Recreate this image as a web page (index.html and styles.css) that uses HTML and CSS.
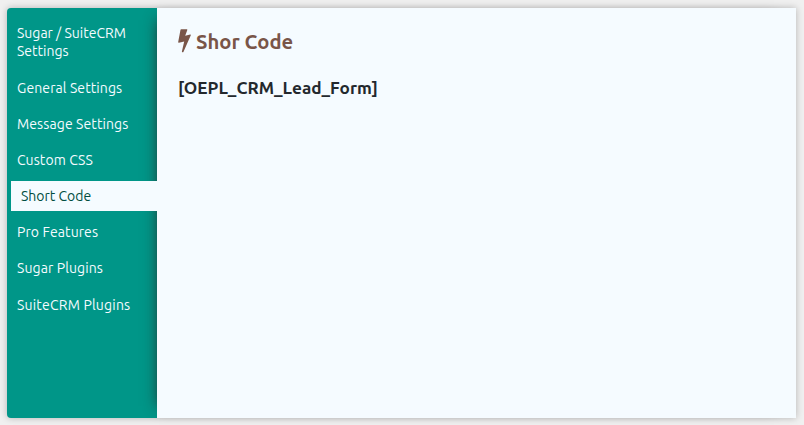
FILE: index.html
```html
<!DOCTYPE html>
<html lang="en">
<head>
<meta charset="utf-8">
<title>Short Code</title>
<link rel="stylesheet" href="styles.css">
</head>
<body>
<div class="panel">
  <nav class="tabs">
    <a class="tab tall">Sugar / SuiteCRM Settings</a>
    <a class="tab">General Settings</a>
    <a class="tab">Message Settings</a>
    <a class="tab">Custom CSS</a>
    <a class="tab active">Short Code</a>
    <a class="tab">Pro Features</a>
    <a class="tab">Sugar Plugins</a>
    <a class="tab wide">SuiteCRM Plugins</a>
  </nav>
  <main class="content">
    <h1 class="title"><svg class="bolt" viewBox="0 0 13 24" aria-hidden="true"><path d="M3.2 0.2H8.9Q9.5 0.3 9.3 0.9L7.2 6.7L12.2 5.5Q13 5.4 12.8 6.2L5.4 22.9Q5 23.5 4.4 23.3Q3.8 23 3.9 22.4L6.2 12.6L0.9 13.7Q0.1 13.8 0.2 12.9L2.5 0.7Q2.6 0.2 3.2 0.2Z"/></svg><span class="label">Shor Code</span></h1>
    <p class="code">[OEPL_CRM_Lead_Form]</p>
  </main>
</div>
</body>
</html>
```
FILE: styles.css
```css
* { box-sizing: border-box; }
body {
  margin: 0;
  padding: 8px 8px 7px 7px;
  height: 425px;
  overflow: hidden;
  background: #f0f0f0;
  font-family: Ubuntu, "Noto Sans", sans-serif;
}
.panel {
  display: flex;
  height: 410px;
  border-radius: 4px 0 0 4px;
  background: #009688;
  box-shadow: 0 0 7px rgba(0, 0, 0, .25);
}
.tabs {
  width: 150px;
  padding-top: 10px;
  display: flex;
  flex-direction: column;
  gap: 6px;
}
.tab {
  padding: 6px 10px;
  font-size: 14px;
  line-height: 18.1px;
  letter-spacing: 0.1px;
  color: #f5fbff;
}
.tab.tall {
  padding-bottom: 6.6px;
  letter-spacing: 0;
}
.tab.wide {
  padding-top: 6.6px;
  letter-spacing: 0.2px;
}
.tab.active {
  position: relative;
  z-index: 1;
  margin: 0 -1px 0 4px;
  background: #f5fbff;
  letter-spacing: 0;
  color: #004d40;
}
.content {
  flex: 1;
  padding: 20px 21px;
  background: #f5fbff;
  box-shadow: -10px 0 14px -12px rgba(40, 30, 30, .95);
}
.title {
  display: flex;
  align-items: center;
  gap: 5px;
  margin: 0;
  height: 26px;
  font-size: 20.2px;
  line-height: 26px;
  font-weight: 700;
  color: #795548;
}
.label { padding-top: 2px; }
.bolt {
  width: 13px;
  height: 24px;
  fill: currentColor;
}
.code {
  margin: 23px 0 0;
  font-size: 17.2px;
  line-height: 22px;
  font-weight: 700;
  color: #23282d;
}
```
